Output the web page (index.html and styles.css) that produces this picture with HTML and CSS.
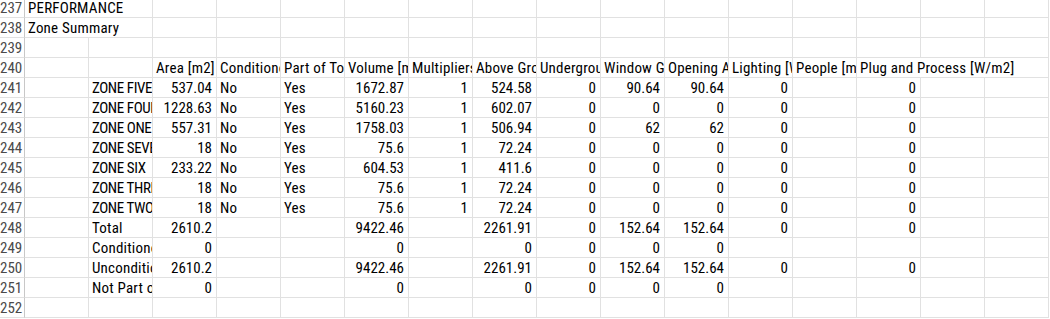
FILE: index.html
```html
<!DOCTYPE html>
<html>
<head>
<meta charset="utf-8">
<link rel="stylesheet" href="styles.css">
</head>
<body>
<div class="sheet">
  <div class="rh">237</div><div class="c s2">PERFORMANCE</div><div class="c"></div><div class="c"></div><div class="c"></div><div class="c"></div><div class="c"></div><div class="c"></div><div class="c"></div><div class="c"></div><div class="c"></div><div class="c"></div><div class="c"></div><div class="c"></div><div class="c"></div><div class="c"></div>
  <div class="rh">238</div><div class="c s2">Zone Summary</div><div class="c"></div><div class="c"></div><div class="c"></div><div class="c"></div><div class="c"></div><div class="c"></div><div class="c"></div><div class="c"></div><div class="c"></div><div class="c"></div><div class="c"></div><div class="c"></div><div class="c"></div><div class="c"></div>
  <div class="rh">239</div><div class="c"></div><div class="c"></div><div class="c"></div><div class="c"></div><div class="c"></div><div class="c"></div><div class="c"></div><div class="c"></div><div class="c"></div><div class="c"></div><div class="c"></div><div class="c"></div><div class="c"></div><div class="c"></div><div class="c"></div><div class="c"></div>
  <div class="rh">240</div><div class="c"></div><div class="c"></div><div class="c">Area [m2]</div><div class="c">Conditioned (Y/N)</div><div class="c">Part of Total Floor Area (Y/N)</div><div class="c">Volume [m3]</div><div class="c">Multipliers</div><div class="c">Above Ground Gross Wall Area [m2]</div><div class="c">Underground Gross Wall Area [m2]</div><div class="c">Window Glass Area [m2]</div><div class="c">Opening Area [m2]</div><div class="c">Lighting [W/m2]</div><div class="c">People [m2 per person]</div><div class="c s3">Plug and Process [W/m2]</div>
  <div class="rh">241</div><div class="c"></div><div class="c z">ZONE FIVE</div><div class="c n">537.04</div><div class="c">No</div><div class="c">Yes</div><div class="c n">1672.87</div><div class="c n">1</div><div class="c n">524.58</div><div class="c n">0</div><div class="c n">90.64</div><div class="c n">90.64</div><div class="c n">0</div><div class="c"></div><div class="c n">0</div><div class="c"></div><div class="c"></div>
  <div class="rh">242</div><div class="c"></div><div class="c z">ZONE FOUR</div><div class="c n">1228.63</div><div class="c">No</div><div class="c">Yes</div><div class="c n">5160.23</div><div class="c n">1</div><div class="c n">602.07</div><div class="c n">0</div><div class="c n">0</div><div class="c n">0</div><div class="c n">0</div><div class="c"></div><div class="c n">0</div><div class="c"></div><div class="c"></div>
  <div class="rh">243</div><div class="c"></div><div class="c z">ZONE ONE</div><div class="c n">557.31</div><div class="c">No</div><div class="c">Yes</div><div class="c n">1758.03</div><div class="c n">1</div><div class="c n">506.94</div><div class="c n">0</div><div class="c n">62</div><div class="c n">62</div><div class="c n">0</div><div class="c"></div><div class="c n">0</div><div class="c"></div><div class="c"></div>
  <div class="rh">244</div><div class="c"></div><div class="c z">ZONE SEVEN</div><div class="c n">18</div><div class="c">No</div><div class="c">Yes</div><div class="c n">75.6</div><div class="c n">1</div><div class="c n">72.24</div><div class="c n">0</div><div class="c n">0</div><div class="c n">0</div><div class="c n">0</div><div class="c"></div><div class="c n">0</div><div class="c"></div><div class="c"></div>
  <div class="rh">245</div><div class="c"></div><div class="c z">ZONE SIX</div><div class="c n">233.22</div><div class="c">No</div><div class="c">Yes</div><div class="c n">604.53</div><div class="c n">1</div><div class="c n">411.6</div><div class="c n">0</div><div class="c n">0</div><div class="c n">0</div><div class="c n">0</div><div class="c"></div><div class="c n">0</div><div class="c"></div><div class="c"></div>
  <div class="rh">246</div><div class="c"></div><div class="c z">ZONE THREE</div><div class="c n">18</div><div class="c">No</div><div class="c">Yes</div><div class="c n">75.6</div><div class="c n">1</div><div class="c n">72.24</div><div class="c n">0</div><div class="c n">0</div><div class="c n">0</div><div class="c n">0</div><div class="c"></div><div class="c n">0</div><div class="c"></div><div class="c"></div>
  <div class="rh">247</div><div class="c"></div><div class="c z">ZONE TWO</div><div class="c n">18</div><div class="c">No</div><div class="c">Yes</div><div class="c n">75.6</div><div class="c n">1</div><div class="c n">72.24</div><div class="c n">0</div><div class="c n">0</div><div class="c n">0</div><div class="c n">0</div><div class="c"></div><div class="c n">0</div><div class="c"></div><div class="c"></div>
  <div class="rh">248</div><div class="c"></div><div class="c">Total</div><div class="c n">2610.2</div><div class="c"></div><div class="c"></div><div class="c n">9422.46</div><div class="c"></div><div class="c n">2261.91</div><div class="c n">0</div><div class="c n">152.64</div><div class="c n">152.64</div><div class="c n">0</div><div class="c"></div><div class="c n">0</div><div class="c"></div><div class="c"></div>
  <div class="rh">249</div><div class="c"></div><div class="c">Conditioned Total</div><div class="c n">0</div><div class="c"></div><div class="c"></div><div class="c n">0</div><div class="c"></div><div class="c n">0</div><div class="c n">0</div><div class="c n">0</div><div class="c n">0</div><div class="c"></div><div class="c"></div><div class="c"></div><div class="c"></div><div class="c"></div>
  <div class="rh">250</div><div class="c"></div><div class="c">Unconditioned Total</div><div class="c n">2610.2</div><div class="c"></div><div class="c"></div><div class="c n">9422.46</div><div class="c"></div><div class="c n">2261.91</div><div class="c n">0</div><div class="c n">152.64</div><div class="c n">152.64</div><div class="c n">0</div><div class="c"></div><div class="c n">0</div><div class="c"></div><div class="c"></div>
  <div class="rh">251</div><div class="c"></div><div class="c">Not Part of Total</div><div class="c n">0</div><div class="c"></div><div class="c"></div><div class="c n">0</div><div class="c"></div><div class="c n">0</div><div class="c n">0</div><div class="c n">0</div><div class="c n">0</div><div class="c"></div><div class="c"></div><div class="c"></div><div class="c"></div><div class="c"></div>
  <div class="rh">252</div><div class="c"></div><div class="c"></div><div class="c"></div><div class="c"></div><div class="c"></div><div class="c"></div><div class="c"></div><div class="c"></div><div class="c"></div><div class="c"></div><div class="c"></div><div class="c"></div><div class="c"></div><div class="c"></div><div class="c"></div><div class="c"></div>
</div>
</body>
</html>
```
FILE: styles.css
```css
html, body {
  margin: 0;
  padding: 0;
  background: #ffffff;
  overflow: hidden;
}
.sheet {
  display: grid;
  grid-template-columns: 25px repeat(16, 64px);
  grid-auto-rows: 20px;
  margin-top: -2px;
  font-family: "Roboto Condensed", "Liberation Sans", sans-serif;
  font-size: 15px;
  color: #000000;
}
.rh, .c {
  box-sizing: border-box;
  border-bottom: 1px solid #e1e1e1;
  white-space: nowrap;
  overflow: hidden;
  line-height: 19px;
  padding-top: 1px;
}
.rh {
  border-right: 1px solid #c8c8c8;
  color: #4a4a4a;
  text-align: right;
  padding-right: 2px;
}
.c {
  border-right: 1px solid #e1e1e1;
  padding-left: 3px;
  padding-right: 0;
  letter-spacing: 0.2px;
}
.c.z {
  letter-spacing: -0.4px;
}
.c.n {
  text-align: right;
  padding-right: 4px;
  letter-spacing: 0;
}
.s2 {
  grid-column: span 2;
}
.s3 {
  grid-column: span 3;
}
```
